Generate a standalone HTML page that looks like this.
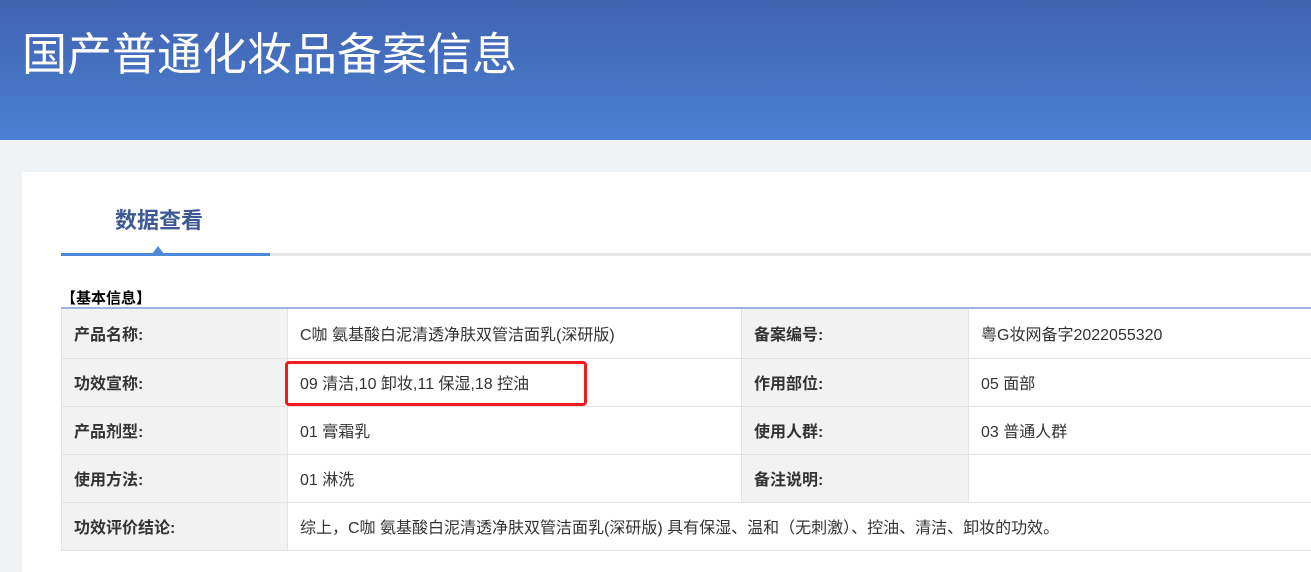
<!DOCTYPE html>
<html><head><meta charset="utf-8"><style>
*{margin:0;padding:0;box-sizing:border-box}
body{width:1311px;height:565px;overflow:hidden;background:#eff3f6;font-family:"Liberation Sans","Noto Sans CJK SC",sans-serif;position:relative}
.ban{position:absolute;left:0;top:0;width:1311px;height:140px;background:linear-gradient(180deg,#4063b0 0%,#4774c4 60%,#4b80d2 100%);overflow:hidden}
.ban h1{position:absolute;left:22px;top:18px;font-size:45px;font-weight:normal;color:#fff}
.card{position:absolute;left:22px;top:172px;width:1289px;height:400px;background:#fff}
.tab{position:absolute;left:115px;top:203px;font-size:22px;font-weight:bold;color:#3d5a95}
.ul{position:absolute;left:61px;top:253px;width:1250px;height:3px;background:#e6e6e6}
.ulb{position:absolute;left:61px;top:253px;width:209px;height:3px;background:#4a8ad8}
.tri{position:absolute;left:152px;top:246px;width:0;height:0;border-left:6px solid transparent;border-right:6px solid transparent;border-bottom:8px solid #4a8ad8}
.sec{position:absolute;left:61px;top:287px;font-size:15px;font-weight:bold;color:#000}
table{position:absolute;left:61px;top:307px;width:1260px;border-collapse:collapse;border-top:2px solid #9ab4de}
td{height:48px;border:1px solid #e3e3e3;font-size:16px;color:#333;padding-left:12px}
tr:first-child td{height:50px}
td.l{background:#f2f2f2;font-weight:bold;width:226px}
td.v1{width:454px}
td.l2{width:227px}
.red{position:absolute;left:285px;top:361px;width:302px;height:45px;border:3px solid #f01c1c;border-radius:4px}
</style></head><body>
<div class="ban"><h1>国产普通化妆品备案信息</h1></div>
<div class="card"></div>
<div class="tab">数据查看</div>
<div class="ul"></div><div class="ulb"></div><div class="tri"></div>
<div class="sec">【基本信息】</div>
<table>
<tr><td class="l">产品名称:</td><td class="v1">C咖 氨基酸白泥清透净肤双管洁面乳(深研版)</td><td class="l l2">备案编号:</td><td>粤G妆网备字2022055320</td></tr>
<tr><td class="l">功效宣称:</td><td>09 清洁,10 卸妆,11 保湿,18 控油</td><td class="l">作用部位:</td><td>05 面部</td></tr>
<tr><td class="l">产品剂型:</td><td>01 膏霜乳</td><td class="l">使用人群:</td><td>03 普通人群</td></tr>
<tr><td class="l">使用方法:</td><td>01 淋洗</td><td class="l">备注说明:</td><td></td></tr>
<tr><td class="l">功效评价结论:</td><td colspan="3">综上，C咖 氨基酸白泥清透净肤双管洁面乳(深研版) 具有保湿、温和（无刺激）、控油、清洁、卸妆的功效。</td></tr>
</table>
<div class="red"></div>
</body></html>
